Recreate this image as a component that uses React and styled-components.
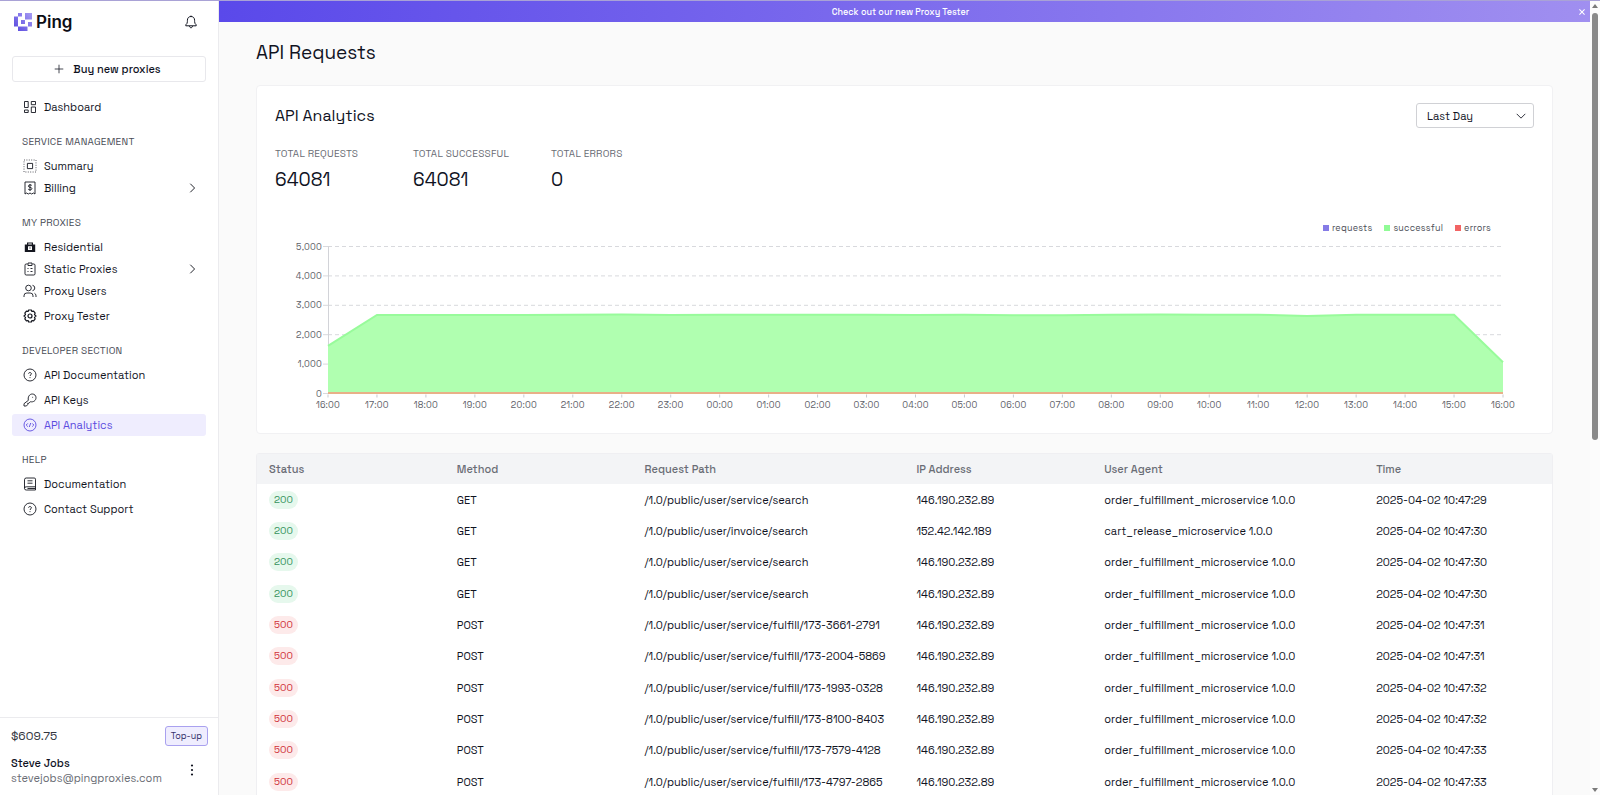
import React, { useState, useRef, useLayoutEffect } from 'react';
import styled, { createGlobalStyle, css } from 'styled-components';

const GlobalStyle = createGlobalStyle`
  * {
    box-sizing: border-box;
  }

  body {
    margin: 0;
    background: #fafafa;
    color: #10131f;
    font-family: 'Space Grotesk', Inter, 'Liberation Sans', sans-serif;
    font-size: 11px;
    line-height: 16px;
  }

  button, select {
    font: inherit;
    color: inherit;
    cursor: pointer;
  }
`;

const Page = styled.div`
  display: grid;
  grid-template-columns: 219px minmax(0, 1fr) 10px;
  height: 100vh;
  overflow: hidden;
  border-top: 1px solid #a9a2d6;
`;

const Sidebar = styled.aside`
  display: flex;
  flex-direction: column;
  background: #fff;
  border-right: 1px solid #ebebee;
`;

const Brand = styled.div`
  display: flex;
  align-items: center;
  justify-content: space-between;
  height: 42px;
  padding: 0 20px 0 14px;
`;

const Logo = styled.a`
  display: flex;
  align-items: center;
  gap: 4px;
  color: #0c0d14;
  font-family: Inter, 'Liberation Sans', sans-serif;
  font-size: 17px;
  font-weight: 600;
  line-height: 20px;
  text-decoration: none;
`;

const IconButton = styled.button`
  display: flex;
  align-items: center;
  justify-content: center;
  padding: 0;
  border: 0;
  background: none;
`;

const BuyButton = styled.button`
  display: flex;
  align-items: center;
  justify-content: center;
  gap: 8px;
  height: 26px;
  margin: 13px 12px 14px;
  padding: 0 8px 0 4px;
  border: 1px solid #e8e8ec;
  border-radius: 3px;
  background: #fff;
  font-weight: 500;
`;

const Nav = styled.nav`
  flex: 1;
  padding: 0 12px;
`;

const NavHeading = styled.h2`
  margin: 0;
  padding: 16px 10px 5px;
  color: #4a4d57;
  font-size: 10px;
  font-weight: 400;
  letter-spacing: 0.025em;
  text-transform: uppercase;
`;

const NavLink = styled.a`
  display: flex;
  align-items: center;
  gap: 7px;
  height: 22px;
  padding: 0 8px 0 11px;
  border-radius: 3px;
  color: #14161f;
  text-decoration: none;

  svg:last-child:not(:first-child) {
    margin-left: auto;
  }

  ${(props) => props.$spaced && css`
    margin-top: 3px;
  `}

  ${(props) => props.$active && css`
    background: #efedfe;
    color: #5b4be0;
  `}
`;

const Account = styled.div`
  padding: 8px 10px 9px 11px;
  border-top: 1px solid #ebebee;
`;

const AccountRow = styled.div`
  display: flex;
  align-items: center;
  justify-content: space-between;
`;

const Balance = styled.span`
  color: #33363f;
  font-size: 12px;
`;

const TopUpButton = styled.button`
  height: 20px;
  padding: 0 5px;
  border: 1px solid #a9a1ef;
  border-radius: 3px;
  background: #efedfe;
  color: #37336b;
  font-size: 9px;
  line-height: 16px;
`;

const User = styled.div`
  padding-top: 10px;
  line-height: 15px;
`;

const UserName = styled.div`
  font-weight: 500;
`;

const UserEmail = styled.div`
  color: #6a6d75;
`;

const MenuButton = styled(IconButton)`
  margin: 8px 9px 0 0;
`;

const Main = styled.main`
  display: flex;
  flex-direction: column;
  overflow: hidden;
`;

const Banner = styled.div`
  display: flex;
  align-items: center;
  flex-shrink: 0;
  height: 21px;
  padding: 0 4px;
  background: linear-gradient(90deg, #5a49ea, #a08ff0);
  color: #fff;
  font-size: 9px;
  font-weight: 500;
`;

const BannerLink = styled.a`
  flex: 1;
  color: inherit;
  text-align: center;
  text-decoration: none;
`;

const Content = styled.div`
  padding: 19px 37px 0;
`;

const PageTitle = styled.h1`
  margin: 0 0 20px;
  font-size: 19px;
  font-weight: 400;
  line-height: 24px;
`;

const Card = styled.section`
  margin-bottom: 19px;
  padding: 17px 18px;
  border: 1px solid #f1f1f3;
  border-radius: 4px;
  background: #fff;
`;

const CardHeader = styled.div`
  display: flex;
  align-items: center;
  justify-content: space-between;
`;

const CardTitle = styled.h2`
  margin: 0;
  font-size: 16px;
  font-weight: 400;
  line-height: 20px;
`;

const SelectBox = styled.label`
  display: grid;
  align-items: center;
  width: 118px;

  select, svg {
    grid-area: 1 / 1;
  }

  svg {
    justify-self: end;
    margin-right: 7px;
    pointer-events: none;
  }
`;

const Select = styled.select`
  height: 25px;
  padding: 0 10px;
  border: 1px solid #d0d1d5;
  border-radius: 3px;
  background: #fff;
  appearance: none;
`;

const Stats = styled.dl`
  display: grid;
  grid-template-columns: repeat(3, 138px);
  margin: 18px 0 28px;
`;

const StatLabel = styled.dt`
  color: #6a6d75;
  font-size: 10px;
  letter-spacing: 0.025em;
  text-transform: uppercase;
`;

const StatValue = styled.dd`
  margin: 6px 0 0;
  font-size: 19px;
  line-height: 24px;
`;

const Legend = styled.ul`
  display: flex;
  justify-content: flex-end;
  gap: 12px;
  margin: 0;
  padding: 0 43px 0 0;
  color: #4c4f58;
  font-size: 9px;
  letter-spacing: 0.025em;
  list-style: none;
`;

const LegendItem = styled.li`
  display: flex;
  align-items: center;
  gap: 3px;

  &::before {
    content: '';
    width: 6px;
    height: 6px;
    background: ${(props) => props.$color};
  }
`;

const ChartArea = styled.div`
  height: 180px;
  overflow: hidden;

  svg {
    display: block;
  }

  text {
    fill: #5d6068;
    font-size: 9px;
    letter-spacing: 0.025em;
  }
`;

const TableBox = styled.div`
  border: 1px solid #efeff2;
  border-radius: 3px;
  background: #fff;
`;

const Table = styled.table`
  width: 100%;
  border-collapse: collapse;
  table-layout: fixed;

  th, td {
    padding: 0 12px;
    text-align: left;
    white-space: nowrap;
  }

  th {
    height: 30px;
    background: #f3f4f6;
    color: #6a6d75;
    font-weight: 500;
  }

  td {
    height: 31px;
  }

  tbody tr:nth-child(3n) td {
    height: 32px;
  }
`;

const Status = styled.span`
  display: inline-block;
  padding: 1px 5px;
  border-radius: 10px;
  background: ${(props) => (props.$error ? '#fdeaea' : '#e6f8ed')};
  color: ${(props) => (props.$error ? '#cf3038' : '#35935c')};
  font-size: 10px;
  line-height: 16px;
`;

const Scrollbar = styled.div`
  display: flex;
  flex-direction: column;
  align-items: center;
  padding: 2px 0;
  background: #fcfcfc;
`;

const ScrollThumb = styled.div`
  width: 6px;
  height: 54%;
  margin: 4px 0 auto;
  border-radius: 3px;
  background: #8a8a8a;
`;

const ICONS = {
  dashboard: <path d="M1.5 1.5h3.7v6H1.5zM8.3 1.5h4.2v3.2H8.3zM1.5 10h3.7v2.5H1.5zM8.3 7h4.2v5.5H8.3z" />,
  summary: (
    <>
      <path d="M4.4 4.4h5.2v5.2H4.4z" />
      <path d="M1 1h12v12H1z" strokeDasharray="1 1.4" strokeWidth="0.7" />
    </>
  ),
  billing: (
    <>
      <path d="M2 1h10v12l-1.6-1-1.7 1L7 12l-1.7 1-1.7-1L2 13z" />
      <path d="M8.8 4.4C8.2 3.7 5.4 3.5 5.4 5.1c0 1.8 3.5.8 3.5 2.5 0 1.6-2.9 1.5-3.7.6M7 3v7" />
    </>
  ),
  residential: (
    <path
      d="M4 4.5V2.4h6v2.1h2.2V12H1.8V4.5zM5.2 4.5h3.6v-.9H5.2zM5 6.3v3.6h4V6.3zM6.4 7.4h1.2v1.2H6.4z"
      fill="currentColor"
      fillRule="evenodd"
      stroke="none"
    />
  ),
  clipboard: (
    <>
      <path d="M4.5 2H3.2Q2 2 2 3.2v8.6Q2 13 3.2 13h7.6q1.2 0 1.2-1.2V3.2Q12 2 10.8 2H9.5" />
      <path d="M5 1h4v2.5H5zM4.5 6.5h1M4.5 9.5h1M7.5 6.5h2M7.5 9.5h2" />
    </>
  ),
  users: (
    <>
      <circle cx="5.5" cy="4" r="2.8" />
      <path d="M1 13v-1.2Q1 9 3.8 9h3.4Q10 9 10 11.8V13M9.5 1.3q2.3.4 2.3 2.7T9.5 6.7M11.5 9.3q1.5.6 1.5 2.5V13" />
    </>
  ),
  gear: (
    <>
      <path d="M5.6 1h2.8l.5 1.5 1.7-.4 1.6 2-.7 1.5L13 7l-1.5 1.4.7 1.5-1.6 2-1.7-.4-.5 1.5H5.6l-.5-1.5-1.7.4-1.6-2 .7-1.5L1 7l1.5-1.4-.7-1.5 1.6-2 1.7.4z" strokeWidth="1.2" />
      <circle cx="7" cy="7" r="2" strokeWidth="1.2" />
    </>
  ),
  help: (
    <>
      <circle cx="7" cy="7" r="6" />
      <path d="M5.6 5.7C5.6 4 8.5 4.2 8.4 5.8 8.4 6.8 7 6.9 7 8M7 9.2v.9" />
    </>
  ),
  key: (
    <>
      <path d="M5.4 7.3C4.5 4 6.5 1 9.3 1 11.5 1 13 2.6 13 4.7c0 2.9-2.7 4.7-5.6 4L5.9 10.3H4.7v1.3L3.4 13H1v-2.3z" />
      <path d="M9.3 4.3h.8" />
    </>
  ),
  code: (
    <>
      <circle cx="7" cy="7" r="6" />
      <path d="M4.8 5.4L3.2 7l1.6 1.6M9.2 5.4L10.8 7 9.2 8.6M7.7 5L6.3 9" />
    </>
  ),
  book: (
    <path d="M3.2 1h8q1.3 0 1.3 1.2V13H3.3Q1.5 13 1.5 11.5V2.8Q1.5 1 3.2 1zM1.5 11.2q0-1.4 1.8-1.4h9.2M4.5 3.8h5M4.5 6.2h5M4.5 11.5h8" />
  ),
  bell: <path d="M1.8 10.8V9.8Q3.4 8.6 3.4 6.5V5.3C3.4 3 4.8 1.5 7 1.5S10.6 3 10.6 5.3v1.2q0 2.1 1.6 3.3v1zM5.5 11C5.5 13.3 8.5 13.3 8.5 11M7 1.5V.6" />,
  plus: <path d="M7 2v10M2 7h10" />,
  right: <path d="M5 2L10 7 5 12" />,
  down: <path d="M2 4.5L7 9.5 12 4.5" />,
  close: <path d="M2.5 2.5l9 9M11.5 2.5l-9 9" />,
};

const Icon = ({ name, size = 14, strokeWidth = 0.9 }) => (
  <svg
    width={size}
    height={size}
    viewBox="0 0 14 14"
    fill="none"
    stroke="currentColor"
    strokeWidth={strokeWidth}
    strokeLinejoin="round"
    aria-hidden="true"
  >
    {ICONS[name]}
  </svg>
);

const LogoMark = () => (
  <svg width="18" height="18" viewBox="0 0 18 18" aria-hidden="true">
    <defs>
      <linearGradient id="mark" x1="1" y1="0" x2="0" y2="1">
        <stop offset="0" stopColor="#a79cf3" />
        <stop offset="1" stopColor="#5646de" />
      </linearGradient>
    </defs>
    <path
      fill="url(#mark)"
      d="M4 0h4v3.5H4zM11 0h7v6.500h-7zM0 3.500h4V13.500H0zM7 7h4v4H7zM14 9h4v4.500h-4zM4 13.500h9.500V18H4z"
    />
  </svg>
);

const SECTIONS = [
  { items: [{ icon: 'dashboard', label: 'Dashboard' }] },
  {
    title: 'Service Management',
    items: [
      { icon: 'summary', label: 'Summary' },
      { icon: 'billing', label: 'Billing', expandable: true },
    ],
  },
  {
    title: 'My Proxies',
    items: [
      { icon: 'residential', label: 'Residential' },
      { icon: 'clipboard', label: 'Static Proxies', expandable: true },
      { icon: 'users', label: 'Proxy Users' },
      { icon: 'gear', label: 'Proxy Tester', spaced: true },
    ],
  },
  {
    title: 'Developer Section',
    items: [
      { icon: 'help', label: 'API Documentation' },
      { icon: 'key', label: 'API Keys', spaced: true },
      { icon: 'code', label: 'API Analytics', spaced: true, active: true },
    ],
  },
  {
    title: 'Help',
    items: [
      { icon: 'book', label: 'Documentation' },
      { icon: 'help', label: 'Contact Support', spaced: true },
    ],
  },
];

const STATS = [
  ['Total Requests', '64081'],
  ['Total Successful', '64081'],
  ['Total Errors', '0'],
];

const SERIES = [
  ['requests', '#857be6'],
  ['successful', '#90fb96'],
  ['errors', '#f26464'],
];

const HOURLY = [
  1620, 2670, 2672, 2670, 2674, 2682, 2684, 2668, 2680, 2678, 2680, 2676, 2672,
  2676, 2660, 2662, 2676, 2688, 2680, 2676, 2640, 2680, 2676, 2676, 1060,
];

const SEARCH = '/1.0/public/user/service/search';
const FULFILL = '/1.0/public/user/service/fulfill/';
const ORDER_AGENT = 'order_fulfillment_microservice 1.0.0';

const REQUESTS = [
  [200, 'GET', SEARCH, '146.190.232.89', ORDER_AGENT, '29'],
  [200, 'GET', '/1.0/public/user/invoice/search', '152.42.142.189', 'cart_release_microservice 1.0.0', '30'],
  [200, 'GET', SEARCH, '146.190.232.89', ORDER_AGENT, '30'],
  [200, 'GET', SEARCH, '146.190.232.89', ORDER_AGENT, '30'],
  [500, 'POST', `${FULFILL}173-3661-2791`, '146.190.232.89', ORDER_AGENT, '31'],
  [500, 'POST', `${FULFILL}173-2004-5869`, '146.190.232.89', ORDER_AGENT, '31'],
  [500, 'POST', `${FULFILL}173-1993-0328`, '146.190.232.89', ORDER_AGENT, '32'],
  [500, 'POST', `${FULFILL}173-8100-8403`, '146.190.232.89', ORDER_AGENT, '32'],
  [500, 'POST', `${FULFILL}173-7579-4128`, '146.190.232.89', ORDER_AGENT, '33'],
  [500, 'POST', `${FULFILL}173-4797-2865`, '146.190.232.89', ORDER_AGENT, '33'],
];

const COLUMNS = [
  ['Status', '14.5%'],
  ['Method', '14.5%'],
  ['Request Path', '21%'],
  ['IP Address', '14.5%'],
  ['User Agent', '21%'],
  ['Time', '14.5%'],
];

const RequestsChart = () => {
  const ref = useRef(null);
  const [width, setWidth] = useState(1258);

  useLayoutEffect(() => {
    const observer = new ResizeObserver(([entry]) => setWidth(entry.contentRect.width));
    setWidth(ref.current.clientWidth);
    observer.observe(ref.current);
    return () => observer.disconnect();
  }, []);

  const left = 53;
  const right = width - 31;
  const top = 10.5;
  const bottom = 157.5;
  const x = (i) => left + ((right - left) * i) / (HOURLY.length - 1);
  const y = (value) => bottom - ((bottom - top) * value) / 5000;
  const line = HOURLY.map((value, i) => `${x(i)},${y(value)}`).join(' ');

  return (
    <ChartArea ref={ref}>
      <svg width={width} height="180" role="img" aria-label="Requests per hour">
        {[0, 1000, 2000, 3000, 4000, 5000].map((value) => (
          <g key={value}>
            <line x1={left} x2={right} y1={y(value)} y2={y(value)} stroke="#d8d9dd" strokeDasharray="4 3" />
            <line x1={left - 5} x2={left} y1={y(value)} y2={y(value)} stroke="#d8d9dd" />
            <text x={left - 6} y={y(value) + 3} textAnchor="end">
              {value.toLocaleString('en-US')}
            </text>
          </g>
        ))}
        <line x1={left + 0.5} x2={left + 0.5} y1={top} y2={bottom} stroke="#d2d3d8" />
        <polygon points={`${left},${bottom} ${line} ${right},${bottom}`} fill="#b0ffb0" />
        <polyline points={line} fill="none" stroke="#98fb9b" strokeWidth="2" />
        <line x1={left} x2={right} y1={bottom - 0.5} y2={bottom - 0.5} stroke="#e8b088" strokeWidth="2" />
        {HOURLY.map((value, i) => (
          <g key={i}>
            <line x1={x(i)} x2={x(i)} y1={bottom + 1} y2={bottom + 4} stroke="#c9cad0" />
            <text x={x(i)} y={bottom + 14} textAnchor="middle">
              {`${String((16 + i) % 24).padStart(2, '0')}:00`}
            </text>
          </g>
        ))}
      </svg>
    </ChartArea>
  );
};

const App = () => {
  const [range, setRange] = useState('day');
  const [bannerOpen, setBannerOpen] = useState(true);

  return (
    <>
      <GlobalStyle />
      <Page>
        <Sidebar>
          <Brand>
            <Logo href="#">
              <LogoMark />
              Ping
            </Logo>
            <IconButton aria-label="Notifications">
              <Icon name="bell" strokeWidth={1} />
            </IconButton>
          </Brand>
          <BuyButton>
            <Icon name="plus" size={12} />
            Buy new proxies
          </BuyButton>
          <Nav>
            {SECTIONS.map((section, i) => (
              <React.Fragment key={i}>
                {section.title && <NavHeading>{section.title}</NavHeading>}
                {section.items.map((item) => (
                  <NavLink key={item.label} href="#" $spaced={item.spaced} $active={item.active}>
                    <Icon name={item.icon} />
                    {item.label}
                    {item.expandable && <Icon name="right" size={12} strokeWidth={1.1} />}
                  </NavLink>
                ))}
              </React.Fragment>
            ))}
          </Nav>
          <Account>
            <AccountRow>
              <Balance>$609.75</Balance>
              <TopUpButton>Top-up</TopUpButton>
            </AccountRow>
            <AccountRow>
              <User>
                <UserName>Steve Jobs</UserName>
                <UserEmail>stevejobs@pingproxies.com</UserEmail>
              </User>
              <MenuButton aria-label="Account menu">
                <svg width="14" height="14" viewBox="0 0 14 14" fill="currentColor" aria-hidden="true">
                  <circle cx="7" cy="2.5" r="1.1" />
                  <circle cx="7" cy="7" r="1.1" />
                  <circle cx="7" cy="11.5" r="1.1" />
                </svg>
              </MenuButton>
            </AccountRow>
          </Account>
        </Sidebar>

        <Main>
          {bannerOpen && (
            <Banner>
              <BannerLink href="#">Check out our new Proxy Tester</BannerLink>
              <IconButton aria-label="Close" onClick={() => setBannerOpen(false)}>
                <Icon name="close" size={8} strokeWidth={1.8} />
              </IconButton>
            </Banner>
          )}
          <Content>
            <PageTitle>API Requests</PageTitle>
            <Card>
              <CardHeader>
                <CardTitle>API Analytics</CardTitle>
                <SelectBox>
                  <Select aria-label="Time range" value={range} onChange={(e) => setRange(e.target.value)}>
                    <option value="day">Last Day</option>
                    <option value="week">Last Week</option>
                  </Select>
                  <Icon name="down" size={12} strokeWidth={1} />
                </SelectBox>
              </CardHeader>
              <Stats>
                {STATS.map(([label, value]) => (
                  <div key={label}>
                    <StatLabel>{label}</StatLabel>
                    <StatValue>{value}</StatValue>
                  </div>
                ))}
              </Stats>
              <Legend>
                {SERIES.map(([label, color]) => (
                  <LegendItem key={label} $color={color}>{label}</LegendItem>
                ))}
              </Legend>
              <RequestsChart />
            </Card>
            <TableBox>
              <Table>
                <colgroup>
                  {COLUMNS.map(([label, width]) => (
                    <col key={label} width={width} />
                  ))}
                </colgroup>
                <thead>
                  <tr>
                    {COLUMNS.map(([label]) => (
                      <th key={label} scope="col">{label}</th>
                    ))}
                  </tr>
                </thead>
                <tbody>
                  {REQUESTS.map(([status, method, path, ip, agent, seconds], i) => (
                    <tr key={i}>
                      <td><Status $error={status >= 500}>{status}</Status></td>
                      <td>{method}</td>
                      <td>{path}</td>
                      <td>{ip}</td>
                      <td>{agent}</td>
                      <td>{`2025-04-02 10:47:${seconds}`}</td>
                    </tr>
                  ))}
                </tbody>
              </Table>
            </TableBox>
          </Content>
        </Main>

        <Scrollbar aria-hidden="true">
          <svg width="8" height="6" viewBox="0 0 8 6" fill="#7a7a7a">
            <path d="M4 1l3 4H1z" />
          </svg>
          <ScrollThumb />
          <svg width="8" height="6" viewBox="0 0 8 6" fill="#7a7a7a">
            <path d="M4 5l3-4H1z" />
          </svg>
        </Scrollbar>
      </Page>
    </>
  );
};

export default App;
